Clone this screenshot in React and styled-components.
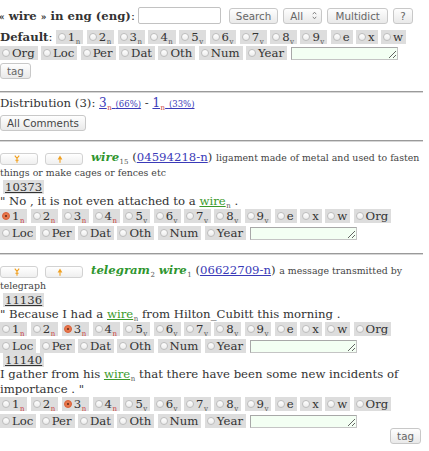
import React from 'react';
import styled, { createGlobalStyle } from 'styled-components';

const GlobalStyle = createGlobalStyle`
  html, body { margin: 0; padding: 0; background: #fff; }
  body {
    font-family: "DejaVu Serif", serif;
    font-size: 11.7px;
    color: #333;
  }
  * { box-sizing: border-box; }
`;

const Page = styled.div`
  width: 429px;
  padding: 7px 6px 0 0;
`;

const SearchBar = styled.div`
  display: flex;
  align-items: center;
  height: 17px;
`;

const Title = styled.div`
  font-weight: bold;
  white-space: nowrap;
  margin-right: 3px;
  margin-left: -1px;
`;

const Quote = styled.span`
  font-size: 9px;
`;

const Colon = styled.span`
  font-weight: normal;
`;

const SearchInput = styled.input`
  width: 83px;
  height: 17px;
  border: 1px solid #c2c2c2;
  border-radius: 2px;
  margin: 0 8px 0 0;
  padding: 0 2px;
  background: #fff;
`;

const Button = styled.button`
  font-family: "DejaVu Sans", sans-serif;
  font-size: 10.3px;
  color: ${(p) => (p.$dark ? '#444' : '#666')};
  height: 16px;
  min-width: ${(p) => p.$w || 0}px;
  padding: 0 6px;
  margin: 0 ${(p) => p.$mr || 0}px 0 0;
  border: 1px solid #c8c8c8;
  border-radius: 3px;
  background: linear-gradient(#fefefe, #e9e9e9);
  line-height: 14px;
  display: inline-flex;
  align-items: center;
  justify-content: center;
`;

const SelectBox = styled.div`
  font-family: "DejaVu Sans", sans-serif;
  font-size: 10.3px;
  color: #666;
  width: 39px;
  height: 16px;
  margin-right: 5px;
  padding: 0 4px 0 6px;
  border: 1px solid #c8c8c8;
  border-radius: 3px;
  background: linear-gradient(#fefefe, #e9e9e9);
  display: flex;
  align-items: center;
  justify-content: space-between;
`;

const TagForm = styled.div`
  margin-top: 6px;
`;

const Options = styled.div`
  display: flex;
  flex-wrap: wrap;
  align-items: center;
  column-gap: 3.4px;
  row-gap: ${(p) => p.$rowGap ?? 2}px;
  margin-top: ${(p) => p.$mt || 0}px;
`;

const DefaultLabel = styled.span`
  font-weight: bold;
  height: 14px;
  line-height: 14px;
  white-space: nowrap;
`;

const Item = styled.span`
  display: inline-flex;
  align-items: center;
  height: 14px;
  line-height: 14px;
  padding: 0 3px 0 2px;
  background: #dddddd;
  white-space: nowrap;
  color: #333;
`;

const ItemText = styled.span`
  display: inline-block;
  line-height: 14px;
`;

const Dot = styled.span`
  position: relative;
  width: 8px;
  height: 8px;
  margin-right: 2px;
  border-radius: 50%;
  border: 1px solid ${(p) => (p.$on ? '#d8603a' : '#bdbdbd')};
  background: ${(p) => (p.$on ? '#e8764a' : 'linear-gradient(#ffffff, #ececec)')};
  flex: none;
  &::after {
    content: '';
    display: ${(p) => (p.$on ? 'block' : 'none')};
    position: absolute;
    left: 2px;
    top: 2px;
    width: 2px;
    height: 2px;
    border-radius: 50%;
    background: #5a2a1a;
  }
`;

const Sub = styled.sub`
  font-size: 7px;
  line-height: 0;
  vertical-align: -2.5px;
  margin-left: 0.5px;
  color: ${(p) => p.$color || '#555'};
`;

const Note = styled.textarea`
  width: 107px;
  height: 13px;
  min-height: 13px;
  padding: 0;
  margin: 0 0 0 1px;
  border: 1px solid #c4c4c4;
  border-top-color: #a8a8a8;
  border-left-color: #a8a8a8;
  background: #f3fff3;
  font-size: 8px;
  line-height: 10px;
  display: block;
`;

const TagRow = styled.div`
  display: flex;
  justify-content: ${(p) => (p.$end ? 'flex-end' : 'flex-start')};
  margin-top: ${(p) => p.$mt || 0}px;
  padding-right: ${(p) => p.$pr || 0}px;
`;

const Rule = styled.hr`
  margin: ${(p) => p.$mt}px 0 0 0;
  border: none;
  border-top: 1px solid #9a9a9a;
  border-bottom: 1px solid #d6d6d6;
  height: 0;
`;

const Distribution = styled.div`
  margin-top: 3px;
  line-height: 15px;
`;

const DistLink = styled.a`
  color: #3a3ab8;
  text-decoration: underline;
  font-size: 12px;
`;

const Pct = styled.span`
  font-size: 8.5px;
`;

const Entry = styled.div`
  margin-top: 8px;
`;

const Header = styled.div`
  line-height: 15px;
`;

const VoteBtn = styled.span`
  display: inline-flex;
  align-items: center;
  vertical-align: -2px;
  width: 38px;
  height: 12px;
  margin-right: ${(p) => p.$mr}px;
  padding-left: ${(p) => p.$pl}px;
  border: 1px solid #d2d2d2;
  border-radius: 3px;
  background: linear-gradient(#ffffff, #efefef);
`;

const Headword = styled.span`
  font-weight: bold;
  font-style: italic;
  color: #2f962f;
`;

const SenseLink = styled.a`
  color: #3a3ab8;
  text-decoration: underline;
`;

const Gloss = styled.span`
  font-size: 9.4px;
  color: #444;
`;

const ExampleId = styled.a`
  display: inline-block;
  margin-left: 3px;
  padding: 0 2px;
  height: 14px;
  line-height: 14px;
  background: #dedede;
  color: #333;
  text-decoration: underline;
`;

const Sentence = styled.div`
  line-height: 15px;
`;

const WordLink = styled.a`
  color: #3c9a2c;
  text-decoration: underline;
`;

const DownArrow = () => (
  <svg width="6" height="8" viewBox="0 0 6 8">
    <path d="M0.8 0.6 L3 3.4 L5.2 0.6 M3 3.4 V7.8 M1.4 5.2 H4.6" stroke="#f0a020" strokeWidth="1.1" fill="none" />
  </svg>
);

const UpArrow = () => (
  <svg width="6" height="8" viewBox="0 0 6 8">
    <path d="M3 0.4 L5.4 4.4 H0.6 Z" fill="#f0a020" />
    <path d="M3 4.2 V7.8" stroke="#f0a020" strokeWidth="1.1" />
  </svg>
);

const Chevrons = () => (
  <svg width="5" height="9" viewBox="0 0 5 9">
    <path d="M0.8 3.2 L2.5 1.2 L4.2 3.2 M0.8 5.8 L2.5 7.8 L4.2 5.8" stroke="#777" strokeWidth="0.9" fill="none" />
  </svg>
);

const NUMS = [
  ['1', 'n'], ['2', 'n'], ['3', 'n'], ['4', 'n'], ['5', 'v'],
  ['6', 'v'], ['7', 'v'], ['8', 'v'], ['9', 'v'],
];
const TAGS = ['e', 'x', 'w', 'Org', 'Loc', 'Per', 'Dat', 'Oth', 'Num', 'Year'];

function Choices({ checked, redNoun, label, rowGap, mt }) {
  return (
    <Options $rowGap={rowGap} $mt={mt}>
      {label && (
        <DefaultLabel>
          {label}
          <Colon>:</Colon>
        </DefaultLabel>
      )}
      {NUMS.map(([n, p]) => (
        <Item key={n}>
          <Dot $on={checked === n} />
          <ItemText>
            {n}
            <Sub $color={redNoun && p === 'n' ? '#c83a3a' : '#555'}>{p}</Sub>
          </ItemText>
        </Item>
      ))}
      {TAGS.map((t) => (
        <Item key={t}>
          <Dot $on={checked === t} />
          <ItemText>{t}</ItemText>
        </Item>
      ))}
      <Note />
    </Options>
  );
}

function Example({ id, checked, children }) {
  return (
    <>
      <ExampleId>{id}</ExampleId>
      <Sentence>{children}</Sentence>
      <Choices checked={checked} redNoun rowGap={3} mt={0} />
    </>
  );
}

function Votes() {
  return (
    <>
      <VoteBtn $mr={7} $pl={13}>
        <DownArrow />
      </VoteBtn>
      <VoteBtn $mr={8} $pl={11}>
        <UpArrow />
      </VoteBtn>
    </>
  );
}

export default function App() {
  return (
    <>
      <GlobalStyle />
      <Page>
        <SearchBar>
          <Title>
            <Quote>«</Quote> wire <Quote>»</Quote> in eng (eng)<Colon>:</Colon>
          </Title>
          <SearchInput />
          <Button $mr={5} $w={46}>Search</Button>
          <SelectBox>
            All
            <Chevrons />
          </SelectBox>
          <Button $mr={5} $w={61}>Multidict</Button>
          <Button $w={16}>?</Button>
        </SearchBar>

        <TagForm>
          <Choices label="Default" />
          <TagRow $mt={3}>
            <Button $w={29}>tag</Button>
          </TagRow>
        </TagForm>

        <Rule $mt={12} />

        <Distribution>
          Distribution (3):{' '}
          <DistLink>
            3<Sub $color="#c83a3a">n</Sub> <Pct>(66%)</Pct>
          </DistLink>{' '}
          -{' '}
          <DistLink>
            1<Sub $color="#c83a3a">n</Sub> <Pct>(33%)</Pct>
          </DistLink>
        </Distribution>
        <TagRow $mt={3}>
          <Button $dark $w={82}>All Comments</Button>
        </TagRow>

        <Rule $mt={9} />

        <Entry>
          <Header>
            <Votes />
            <Headword>wire</Headword>
            <Sub>15</Sub> (<SenseLink>04594218-n</SenseLink>){' '}
            <Gloss>ligament made of metal and used to fasten things or make cages or fences etc</Gloss>
          </Header>
          <Example id="10373" checked="1">
            " No , it is not even attached to a{' '}
            <WordLink>
              wire<Sub>n</Sub>
            </WordLink>{' '}
            .
          </Example>
        </Entry>

        <Rule $mt={13} />

        <Entry>
          <Header>
            <Votes />
            <Headword>telegram</Headword>
            <Sub>2</Sub> <Headword>wire</Headword>
            <Sub>1</Sub> (<SenseLink>06622709-n</SenseLink>){' '}
            <Gloss>a message transmitted by telegraph</Gloss>
          </Header>
          <Example id="11136" checked="3">
            " Because I had a{' '}
            <WordLink>
              wire<Sub>n</Sub>
            </WordLink>{' '}
            from Hilton_Cubitt this morning .
          </Example>
          <Example id="11140" checked="3">
            I gather from his{' '}
            <WordLink>
              wire<Sub>n</Sub>
            </WordLink>{' '}
            that there have been some new incidents of importance . "
          </Example>
          <TagRow $end $pr={2}>
            <Button $w={29}>tag</Button>
          </TagRow>
        </Entry>
      </Page>
    </>
  );
}
